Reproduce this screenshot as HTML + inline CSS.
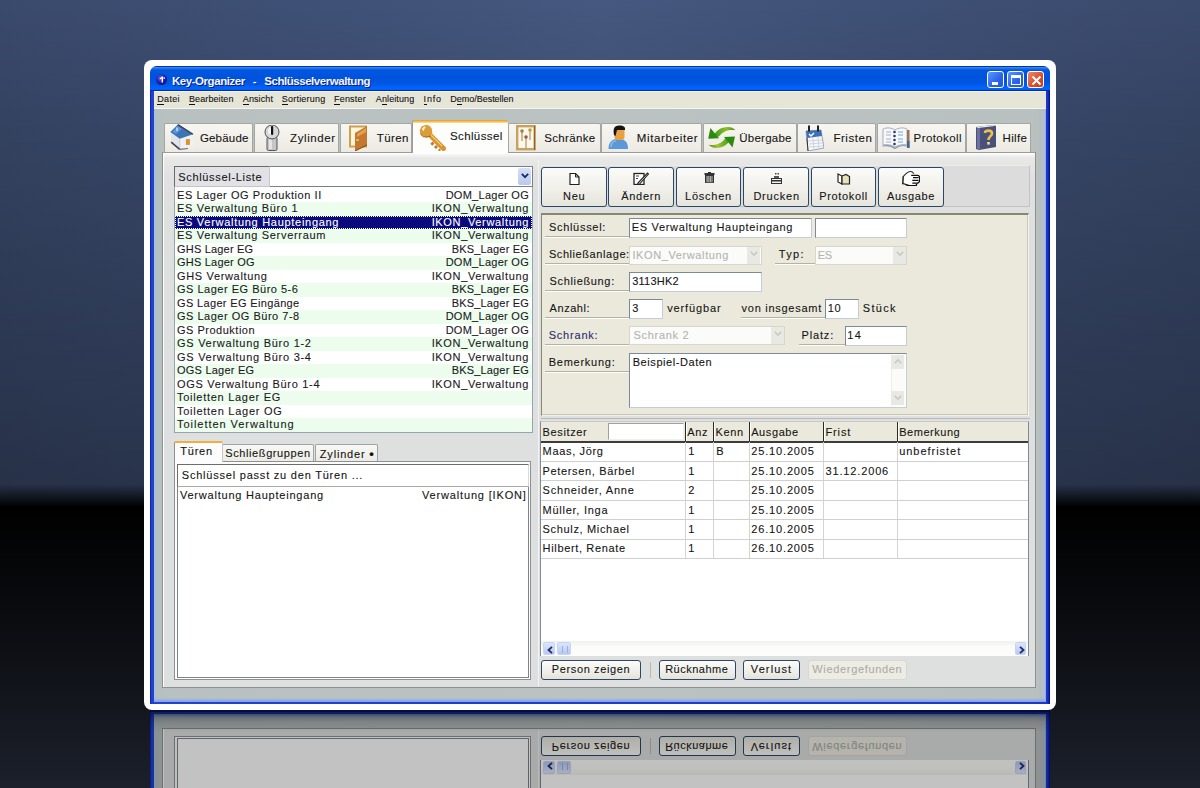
<!DOCTYPE html>
<html><head><meta charset="utf-8">
<style>
*{box-sizing:border-box;margin:0;padding:0}
html,body{width:1200px;height:788px;overflow:hidden}
body{position:relative;-webkit-text-stroke:0.1px currentColor;font-family:"Liberation Sans",sans-serif;font-size:11px;letter-spacing:0;color:#1a1a1a;line-height:13px;
background:#000}
.a{position:absolute}
#bgtop{left:0;top:0;width:1200px;height:507px;
background:linear-gradient(to bottom,rgba(0,0,0,0) 0,rgba(0,0,0,.12) 150px,rgba(0,0,0,.33) 484px,rgba(0,0,0,1) 507px),
linear-gradient(to right,#3a4a6c 0%,#3f5076 25%,#46587f 50%,#3f5076 75%,#3a4a6c 100%);}
#bgbot{left:0;top:506px;width:1200px;height:282px;background:linear-gradient(to bottom,#000 0%,#050608 20%,#0d0f14 50%,#151820 75%,#1c202b 100%)}
#frame{left:144px;top:60px;width:912px;height:650px;background:#fff;border-radius:8px}
#win{left:150px;top:66px;width:900px;height:638px;background:linear-gradient(to right,#0612a0 0,#1c3ccc 1px,#2242d0 3px,#1c38c8 897px,#0a20b0 899px,#000870 900px);border-radius:7px 7px 0 0;overflow:hidden}
#title{left:0;top:0;width:900px;height:25px;border-radius:7px 7px 0 0;
background:linear-gradient(to bottom,#003aa0 0,#003aa0 1px,#3d8eff 1px,#2a78f0 2px,#0058e0 4px,#0052dc 12px,#0058e6 18px,#0066ff 22px,#0060f8 23.5px,#0030a0 24px,#0030a0 25px)}
#ttext{left:22px;top:9.2px;color:#f2f6ff;word-spacing:1.3px;font-weight:bold;font-size:11.5px;-webkit-text-stroke:0;white-space:pre;text-shadow:1px 1px 0 #0a1e78}
#ticon{left:6px;top:8px;width:11px;height:11px;border-radius:50%;background:radial-gradient(circle at 40% 35%,#5a5af0,#1a1aa0 55%,#0c0c60)}
.tb{top:5px;width:17px;height:17px;border:1px solid #fff;border-radius:3px}
.tbb{background:linear-gradient(135deg,#5c98ff,#2a62e8 60%,#2058e0)}
.tbc{background:linear-gradient(135deg,#f08868,#d84c28 60%,#c83c1c)}
#menu{left:4px;top:25px;width:892px;height:17px;background:#e5e5d8;border-top:1px solid #f4f4fa}
.mi{font-size:9px;line-height:11px;color:#111;white-space:pre}
.mi u{text-decoration:none;border-bottom:1px solid #111;display:inline-block;line-height:9.2px}
#body{left:4px;top:42px;width:892px;height:593.5px;border-top:1px solid #f4f4f4;background:linear-gradient(to bottom,rgba(255,255,255,0) 0,rgba(255,255,255,0) 589px,rgba(150,180,235,.85) 590.5px,rgba(130,160,230,.9) 592.5px),linear-gradient(to right,#a8bce8 0,#b0c0c4 1.5px,#b4c0c0 4px,#b9c0c0 8px,#bac2c2 50%,#b9c0c0 884px,#b8bcbc 887px,#a8c0e0 891px,#7898e0 892px)}

.tab{top:123px;height:29px;border:1px solid #a4a6a4;border-bottom:none;border-radius:2px 2px 0 0;background:linear-gradient(#f7f6f1,#eceae2)}
.tab.act{top:120px;height:33px;background:linear-gradient(#e49a2a 0,#eeb040 1px,#f8d888 2.5px,#fefcf4 3.5px,#fdfdfc 6px);border:none;border-left:1px solid #9c9c9c;z-index:2}
.t{white-space:pre;color:#151515}
#panel{left:162px;top:152px;width:874px;height:536px;background:linear-gradient(#fbfbfb 0,#e8e8e6 5px,#e0e1e0 25px,#dedfdf 60px);border:1px solid #8e9090;border-top-color:#9a9a9a;box-shadow:inset 1px 1px 0 #fff}
#lh{left:174px;top:166px;width:96px;height:21px;background:#e2e2e6;border:1px solid #6a6a6a;border-right:1px solid #c8c8c8;border-bottom:1px solid #c4c4c4}
#combo{left:270px;top:166px;width:263px;height:21px;background:#fff;border:1px solid #7a8088;border-left:none}
#ddb{left:518px;top:168px;width:13px;height:17px;background:linear-gradient(#d6e0f8,#b8c8f0);border-radius:2px}
#list{left:174px;top:187px;width:359px;height:246px;background:#fff;border:1px solid #97a4b0;border-top:none;overflow:hidden}
.r{position:absolute;left:0;width:357px;height:13.5px;white-space:pre}
.r span{position:absolute;top:0px;letter-spacing:0.55px}
.r .L{left:2px}.r .R{right:3px}
.r.g{background:#ecfdee}
.r.sel{background:#0a0a7e;color:#fff;outline:1px dotted #fff;outline-offset:-1px}

.btab{top:444px;height:17px;border:1px solid #a0a4a8;border-bottom:none;border-radius:2px 2px 0 0;background:linear-gradient(#f8f8f4,#ecebe4);white-space:pre}
.btab.act{top:441px;height:21px;background:#fcfcfc;border-top:2px solid #f0b040;border-left-color:#8c9090;border-right-color:#c8c8c8;z-index:2}
#tp{left:174px;top:461px;width:357px;height:219px;background:#fcfcfc;border:1px solid #8c9090;box-shadow:inset -1px -1px 0 #fff}
#tch{left:177px;top:464px;width:352px;height:23px;background:#fff;border:1px solid;border-color:#6c6c6c #d8d8d8 #a8a8a8 #6c6c6c}
#tcl{left:177px;top:487px;width:352px;height:191px;background:#fff;border:1px solid #7c8488;border-top:none}
#tb{left:541px;top:165px;width:489px;height:42px;background:#dcdcdc;border:1px solid #c4c4c4;border-top-color:#ececec;border-left-color:#ececec}
.btn{top:167px;height:40px;border:1px solid #2c4868;border-radius:3px;background:linear-gradient(#fbfbf8,#efeee8 60%,#e6e5dc);text-align:center}
#form{left:541px;top:213px;width:488px;height:203px;background:#ebe9dc;border:1px solid #8a8770;border-top:2px solid #8a8770;border-right-color:#f6f6f0;border-bottom-color:#f0f0e8;box-shadow:inset -1px -1px 0 #c8c6b8}
.lab{white-space:pre}
.sep{height:2px;border-top:1px solid #b4b2a2;border-bottom:1px solid #fff}
.inp{background:#fff;border:1px solid #7a8a99;border-right-color:#c4ccd4;border-bottom-color:#c4ccd4;white-space:pre;padding-left:3px;line-height:17px}
.dis{background:#fbfbf9;border:1px solid #d6d6ce;color:#aaa;white-space:pre;padding-left:3px;line-height:17px}
.ddd{width:13px;height:17px;background:#e9e9e3}
#grid{left:540px;top:421px;width:489px;height:235px;background:#fff;border:1px solid #7c8c9c;border-top-color:#c8c8c8}
.gh{top:422px;height:20px;background:#ebe9dc}
.ghl{left:541px;top:441px;width:487px;height:2px;background:#3c3c3c}
.gcol{width:1px;background:#d4d4d4}
.grow{left:541px;width:487px;height:1px;background:#d0d0d0}
.gt{white-space:pre}
.bb{top:660px;height:20px;border:1px solid #2c4868;border-radius:3px;background:linear-gradient(#fbfbf8,#efeee8 60%,#e4e3da);text-align:center;white-space:pre;line-height:17px}

.gr{letter-spacing:0.5px}
.sbb{height:13px;background:linear-gradient(#dce6fc,#b8c8f2);border-radius:2px;border:1px solid #c8d4f4}

#reflov{left:150px;top:0;width:900px;height:78px;background:linear-gradient(to bottom,rgba(0,0,10,.6) 0,rgba(0,0,10,.55) 4px,rgba(0,0,0,.45) 6px,rgba(0,0,0,.32) 12px,rgba(0,0,0,.24) 22px,rgba(0,0,0,.24) 78px)}
</style></head><body>
<div class="a" id="bgtop"></div>
<div class="a" id="bgbot"></div>
<div class="a" id="frame"></div>
<div class="a" id="app" style="left:0;top:0;width:1200px;height:788px">
<div class="a" id="win">
  <div class="a" id="title">
    <div class="a" id="ticon"><svg class="a" style="left:0;top:0" width="11" height="11" viewBox="0 0 11 11"><path d="M3.5,4.5 L6,2.5 L7,2.5 L7,8.5 L5.6,8.5 L5.6,4.6 L4,5.6 Z" fill="#fff"/><circle cx="8.2" cy="4" r="0.9" fill="#c8c8ff"/></svg></div>
    <div class="a" id="ttext" style="--w:197.5;letter-spacing:-0.454px">Key-Organizer  -  Schlüsselverwaltung</div>
    <div class="a tb tbb" style="left:837px"><div class="a" style="left:4px;top:10px;width:6px;height:3px;background:#fff"></div></div>
    <div class="a tb tbb" style="left:857px"><div class="a" style="left:3px;top:3px;width:10px;height:10px;border:1px solid #fff;border-top-width:3px"></div></div>
    <div class="a tb tbc" style="left:877px"><svg class="a" style="left:2px;top:2px" width="13" height="13" viewBox="0 0 13 13"><path d="M2.5,2.5 L10.5,10.5 M10.5,2.5 L2.5,10.5" stroke="#fff" stroke-width="2"/></svg></div>
  </div>
  <div class="a" id="menu"></div>
  <div class="a" id="body"></div>
</div>
<div class="a mi" style="left:157.3px;top:93.8px;--w:21.2;letter-spacing:0.296px"><u>D</u>atei</div>
<div class="a mi" style="left:189.0px;top:93.8px;--w:43.4;letter-spacing:0.095px"><u>B</u>earbeiten</div>
<div class="a mi" style="left:242.8px;top:93.8px;--w:29.1;letter-spacing:0.095px"><u>A</u>nsicht</div>
<div class="a mi" style="left:281.8px;top:93.8px;--w:42.4;letter-spacing:0.206px"><u>S</u>ortierung</div>
<div class="a mi" style="left:334.0px;top:93.8px;--w:30.7;letter-spacing:0.197px"><u>F</u>enster</div>
<div class="a mi" style="left:375.8px;top:93.8px;--w:37.4;letter-spacing:0.105px">A<u>n</u>leitung</div>
<div class="a mi" style="left:423.6px;top:93.8px;--w:16.5;letter-spacing:0.823px"><u>I</u>nfo</div>
<div class="a mi" style="left:450.2px;top:93.8px;--w:62.4;letter-spacing:-0.011px">D<u>e</u>mo/Bestellen</div>
<div class="a" id="panel"></div>
<div class="a tab" style="left:164px;width:89px"></div>
<div class="a tab" style="left:254px;width:85px"></div>
<div class="a tab" style="left:340px;width:72px"></div>
<div class="a tab act" style="left:412px;width:96px"></div>
<div class="a tab" style="left:508px;width:93px"></div>
<div class="a tab" style="left:601px;width:101px"></div>
<div class="a tab" style="left:703px;width:94px"></div>
<div class="a tab" style="left:797px;width:79px"></div>
<div class="a tab" style="left:877px;width:89px"></div>
<div class="a tab" style="left:966px;width:65px"></div>
<div class="a t" style="left:199.9px;top:131.8px;--w:47.5;letter-spacing:0.195px;z-index:4;font-size:11.5px">Gebäude</div>
<div class="a t" style="left:290.0px;top:131.8px;--w:44.2;letter-spacing:0.613px;z-index:4;font-size:11.5px">Zylinder</div>
<div class="a t" style="left:376.7px;top:131.8px;--w:30.8;letter-spacing:0.438px;z-index:4;font-size:11.5px">Türen</div>
<div class="a t" style="left:450.0px;top:130.2px;--w:51.2;letter-spacing:0.373px;z-index:4;font-size:11.5px">Schlüssel</div>
<div class="a t" style="left:544.2px;top:131.8px;--w:50.0;letter-spacing:0.344px;z-index:4;font-size:11.5px">Schränke</div>
<div class="a t" style="left:636.7px;top:131.8px;--w:60.0;letter-spacing:0.667px;z-index:4;font-size:11.5px">Mitarbeiter</div>
<div class="a t" style="left:739.2px;top:131.8px;--w:51.3;letter-spacing:0.255px;z-index:4;font-size:11.5px">Übergabe</div>
<div class="a t" style="left:833.4px;top:131.8px;--w:37.5;letter-spacing:0.557px;z-index:4;font-size:11.5px">Fristen</div>
<div class="a t" style="left:913.6px;top:131.8px;--w:46.9;letter-spacing:0.394px;z-index:4;font-size:11.5px">Protokoll</div>
<div class="a t" style="left:1002.5px;top:131.8px;--w:23.4;letter-spacing:0.346px;z-index:4;font-size:11.5px">Hilfe</div>
<div class="a" id="lh"></div>
<div class="a t" style="left:178.2px;top:171.0px;--w:82.5;letter-spacing:0.680px;">Schlüssel-Liste</div>
<div class="a" id="combo"></div><div class="a" id="ddb"><svg class="a" style="left:3px;top:5px" width="8" height="6" viewBox="0 0 8 6"><path d="M0.8,0.8 L4,4.2 L7.2,0.8" stroke="#1c2c5c" stroke-width="1.8" fill="none"/></svg></div>
<div class="a" id="list">
<div class="r" style="top:1.5px"><span class="L" style="--w:143.2;letter-spacing:0.556px">ES Lager OG Produktion II</span><span class="R" style="--w:82.1;letter-spacing:0.273px">DOM_Lager OG</span></div>
<div class="r g" style="top:15.0px"><span class="L" style="--w:119.6;letter-spacing:0.683px">ES Verwaltung Büro 1</span><span class="R" style="--w:95.7;letter-spacing:0.662px">IKON_Verwaltung</span></div>
<div class="r sel" style="top:28.5px"><span class="L" style="--w:160.5;letter-spacing:0.711px">ES Verwaltung Haupteingang</span><span class="R" style="--w:95.7;letter-spacing:0.662px">IKON_Verwaltung</span></div>
<div class="r g" style="top:42.0px"><span class="L" style="--w:147.4;letter-spacing:0.684px">ES Verwaltung Serverraum</span><span class="R" style="--w:95.7;letter-spacing:0.662px">IKON_Verwaltung</span></div>
<div class="r" style="top:55.5px"><span class="L" style="--w:75.1;letter-spacing:0.192px">GHS Lager EG</span><span class="R" style="--w:76.2;letter-spacing:0.180px">BKS_Lager EG</span></div>
<div class="r g" style="top:69.0px"><span class="L" style="--w:76.6;letter-spacing:0.218px">GHS Lager OG</span><span class="R" style="--w:82.1;letter-spacing:0.273px">DOM_Lager OG</span></div>
<div class="r" style="top:82.5px"><span class="L" style="--w:88.9;letter-spacing:0.659px">GHS Verwaltung</span><span class="R" style="--w:95.7;letter-spacing:0.662px">IKON_Verwaltung</span></div>
<div class="r g" style="top:96.0px"><span class="L" style="--w:119.9;letter-spacing:0.506px">GS Lager EG Büro 5-6</span><span class="R" style="--w:76.2;letter-spacing:0.180px">BKS_Lager EG</span></div>
<div class="r" style="top:109.5px"><span class="L" style="--w:121.2;letter-spacing:0.349px">GS Lager EG Eingänge</span><span class="R" style="--w:76.2;letter-spacing:0.180px">BKS_Lager EG</span></div>
<div class="r g" style="top:123.0px"><span class="L" style="--w:121.2;letter-spacing:0.511px">GS Lager OG Büro 7-8</span><span class="R" style="--w:82.1;letter-spacing:0.273px">DOM_Lager OG</span></div>
<div class="r" style="top:136.5px"><span class="L" style="--w:76.6;letter-spacing:0.504px">GS Produktion</span><span class="R" style="--w:82.1;letter-spacing:0.273px">DOM_Lager OG</span></div>
<div class="r g" style="top:150.0px"><span class="L" style="--w:133.0;letter-spacing:0.732px">GS Verwaltung Büro 1-2</span><span class="R" style="--w:95.7;letter-spacing:0.662px">IKON_Verwaltung</span></div>
<div class="r" style="top:163.5px"><span class="L" style="--w:133.0;letter-spacing:0.732px">GS Verwaltung Büro 3-4</span><span class="R" style="--w:95.7;letter-spacing:0.662px">IKON_Verwaltung</span></div>
<div class="r g" style="top:177.0px"><span class="L" style="--w:76.0;letter-spacing:0.219px">OGS Lager EG</span><span class="R" style="--w:76.2;letter-spacing:0.180px">BKS_Lager EG</span></div>
<div class="r" style="top:190.5px"><span class="L" style="--w:141.6;letter-spacing:0.701px">OGS Verwaltung Büro 1-4</span><span class="R" style="--w:95.7;letter-spacing:0.662px">IKON_Verwaltung</span></div>
<div class="r g" style="top:204.0px"><span class="L" style="--w:102.3;letter-spacing:0.716px">Toiletten Lager EG</span></div>
<div class="r" style="top:217.5px"><span class="L" style="--w:103.8;letter-spacing:0.733px">Toiletten Lager OG</span></div>
<div class="r g" style="top:231.0px"><span class="L" style="--w:115.6;letter-spacing:0.955px">Toiletten Verwaltung</span></div>
</div>
<div class="a" id="tp"></div>
<div class="a btab act" style="left:174px;width:49px"></div>
<div class="a btab" style="left:222px;width:92px"></div>
<div class="a btab" style="left:315px;width:63px"></div>
<div class="a t" style="left:180.2px;top:444.7px;--w:31.0;letter-spacing:0.812px;z-index:4">Türen</div>
<div class="a t" style="left:225.3px;top:446.9px;--w:83.8;letter-spacing:0.595px;z-index:4">Schließgruppen</div>
<div class="a t" style="left:319.8px;top:446.9px;--w:53.1;letter-spacing:0.817px;z-index:4;--n:10">Zylinder <b style="font-size:13px;position:relative;top:0.5px">•</b></div>
<div class="a" id="tch"></div>
<div class="a" id="tcl"></div>
<div class="a t" style="left:181.8px;top:468.7px;--w:179.6;letter-spacing:0.783px;">Schlüssel passt zu den Türen ...</div>
<div class="a t" style="left:179.9px;top:488.7px;--w:142.3;letter-spacing:0.787px;">Verwaltung Haupteingang</div>
<div class="a t" style="left:422.0px;top:488.7px;--w:102.9;letter-spacing:0.838px;">Verwaltung [IKON]</div>
<div class="a" id="tb"></div>
<div class="a btn" style="left:541px;width:66px"></div>
<div class="a btn" style="left:608px;width:66px"></div>
<div class="a btn" style="left:676px;width:65px"></div>
<div class="a btn" style="left:743px;width:66px"></div>
<div class="a btn" style="left:811px;width:65px"></div>
<div class="a btn" style="left:878px;width:66px"></div>
<div class="a t" style="left:563.1px;top:189.6px;--w:20.5;letter-spacing:0.656px;z-index:4">Neu</div>
<div class="a t" style="left:621.2px;top:189.6px;--w:38.1;letter-spacing:0.723px;z-index:4">Ändern</div>
<div class="a t" style="left:685.1px;top:189.6px;--w:45.1;letter-spacing:0.751px;z-index:4">Löschen</div>
<div class="a t" style="left:753.4px;top:189.6px;--w:44.7;letter-spacing:0.789px;z-index:4">Drucken</div>
<div class="a t" style="left:819.2px;top:189.6px;--w:47.0;letter-spacing:0.650px;z-index:4">Protokoll</div>
<div class="a t" style="left:887.0px;top:190.1px;--w:46.5;letter-spacing:0.677px;z-index:4">Ausgabe</div>
<div class="a" id="form"></div>
<div class="a t" style="left:548.9px;top:220.6px;--w:55.5;letter-spacing:0.707px;">Schlüssel:</div>
<div class="a sep" style="left:545px;top:236px;width:84px"></div>
<div class="a inp" style="left:629px;top:218px;width:183px;height:20px"></div>
<div class="a inp" style="left:815px;top:218px;width:92px;height:20px"></div>
<div class="a t" style="left:631.7px;top:220.9px;--w:159.8;letter-spacing:0.683px;">ES Verwaltung Haupteingang</div>
<div class="a t" style="left:548.9px;top:247.9px;--w:79.3;letter-spacing:0.578px;">Schließanlage:</div>
<div class="a sep" style="left:545px;top:263px;width:84px"></div>
<div class="a dis" style="left:629px;top:246px;width:133px;height:19px"></div>
<div class="a ddd" style="left:747px;top:247px"><svg class="a" style="left:3px;top:4px" width="8" height="6" viewBox="0 0 8 6"><path d="M0.8,0.8 L4,4.2 L7.2,0.8" stroke="#c8c8c0" stroke-width="1.6" fill="none"/></svg></div>
<div class="a t" style="left:632.4px;top:249.0px;--w:95.0;letter-spacing:0.612px;color:#b4b4b0">IKON_Verwaltung</div>
<div class="a t" style="left:778.7px;top:247.9px;--w:24.0;letter-spacing:1.401px;">Typ:</div>
<div class="a sep" style="left:775px;top:263px;width:40px"></div>
<div class="a dis" style="left:815px;top:246px;width:92px;height:19px"></div>
<div class="a ddd" style="left:893px;top:247px"><svg class="a" style="left:3px;top:4px" width="8" height="6" viewBox="0 0 8 6"><path d="M0.8,0.8 L4,4.2 L7.2,0.8" stroke="#c8c8c0" stroke-width="1.6" fill="none"/></svg></div>
<div class="a t" style="left:817.7px;top:249.0px;--w:13.5;letter-spacing:-0.188px;color:#b4b4b0">ES</div>
<div class="a t" style="left:549.6px;top:274.9px;--w:63.6;letter-spacing:0.651px;">Schließung:</div>
<div class="a sep" style="left:545px;top:290px;width:84px"></div>
<div class="a inp" style="left:629px;top:272px;width:133px;height:20px"></div>
<div class="a t" style="left:632.2px;top:274.9px;--w:45.5;letter-spacing:0.240px;">3113HK2</div>
<div class="a t" style="left:549.6px;top:301.9px;--w:39.0;letter-spacing:0.549px;">Anzahl:</div>
<div class="a sep" style="left:545px;top:317px;width:84px"></div>
<div class="a inp" style="left:629px;top:299px;width:34px;height:20px"></div>
<div class="a t" style="left:632.2px;top:301.9px;--w:5.0;letter-spacing:-0.125px;">3</div>
<div class="a t" style="left:667.2px;top:301.9px;--w:52.5;letter-spacing:0.877px;">verfügbar</div>
<div class="a t" style="left:741.6px;top:301.9px;--w:78.6;letter-spacing:0.722px;">von insgesamt</div>
<div class="a sep" style="left:741px;top:317px;width:84px"></div>
<div class="a inp" style="left:825px;top:299px;width:34px;height:20px"></div>
<div class="a t" style="left:827.7px;top:301.9px;--w:12.0;letter-spacing:0.750px;">10</div>
<div class="a t" style="left:862.8px;top:301.9px;--w:31.8;letter-spacing:1.321px;">Stück</div>
<div class="a t" style="left:548.7px;top:328.9px;--w:48.0;letter-spacing:0.797px;color:#2c2c70">Schrank:</div>
<div class="a sep" style="left:545px;top:344px;width:84px"></div>
<div class="a dis" style="left:629px;top:326px;width:156px;height:19px"></div>
<div class="a ddd" style="left:771px;top:327px"><svg class="a" style="left:3px;top:4px" width="8" height="6" viewBox="0 0 8 6"><path d="M0.8,0.8 L4,4.2 L7.2,0.8" stroke="#c8c8c0" stroke-width="1.6" fill="none"/></svg></div>
<div class="a t" style="left:633.6px;top:329.4px;--w:54.0;letter-spacing:0.684px;color:#b4b4b0">Schrank 2</div>
<div class="a t" style="left:801.6px;top:328.9px;--w:30.6;letter-spacing:0.817px;">Platz:</div>
<div class="a sep" style="left:799px;top:344px;width:46px"></div>
<div class="a inp" style="left:845px;top:326px;width:62px;height:20px"></div>
<div class="a t" style="left:847.2px;top:328.9px;--w:12.6;letter-spacing:1.350px;">14</div>
<div class="a t" style="left:548.7px;top:355.9px;--w:65.1;letter-spacing:0.754px;">Bemerkung:</div>
<div class="a sep" style="left:545px;top:371px;width:84px"></div>
<div class="a inp" style="left:629px;top:353px;width:278px;height:55px"></div>
<div class="a t" style="left:632.7px;top:355.9px;--w:78.0;letter-spacing:0.573px;">Beispiel-Daten</div>
<div class="a" style="left:891px;top:355px;width:14px;height:51px;background:#fbfbf9;border-left:1px solid #eeeeea"></div>
<div class="a ddd" style="left:891px;top:355px;height:14px"><svg class="a" style="left:3px;top:3px" width="8" height="6" viewBox="0 0 8 6"><path d="M0.8,5.2 L4,1.8 L7.2,5.2" stroke="#c8c8c0" stroke-width="1.6" fill="none"/></svg></div>
<div class="a ddd" style="left:891px;top:391px;height:14px"><svg class="a" style="left:3px;top:4px" width="8" height="6" viewBox="0 0 8 6"><path d="M0.8,0.8 L4,4.2 L7.2,0.8" stroke="#c8c8c0" stroke-width="1.6" fill="none"/></svg></div>
<div class="a" style="left:538px;top:160px;width:1px;height:526px;background:#f2f2f2"></div>
<div class="a" style="left:541px;top:418px;width:489px;height:1px;background:#b8b8b8;border-bottom:0"></div>
<div class="a" id="grid"></div>
<div class="a gh" style="left:541px;width:487px"></div>
<div class="a" style="left:608px;top:423px;width:76px;height:17px;background:#fff;border:1px solid;border-color:#a0a0a0 #f0f0f0 #f0f0f0 #a0a0a0"></div>
<div class="a ghl"></div>
<div class="a t" style="left:542.6px;top:425.6px;--w:43.2;letter-spacing:0.636px;">Besitzer</div>
<div class="a t" style="left:687.2px;top:425.6px;--w:19.4;letter-spacing:0.716px;">Anz</div>
<div class="a t" style="left:715.6px;top:425.6px;--w:26.6;letter-spacing:0.632px;">Kenn</div>
<div class="a t" style="left:751.2px;top:425.6px;--w:46.0;letter-spacing:0.594px;">Ausgabe</div>
<div class="a t" style="left:825.5px;top:425.6px;--w:23.8;letter-spacing:0.852px;">Frist</div>
<div class="a t" style="left:899.2px;top:425.6px;--w:59.5;letter-spacing:0.529px;">Bemerkung</div>
<div class="a" style="left:685px;top:422px;width:2px;height:19px;background:#2a2a2a;border-right:1px solid #fff"></div>
<div class="a gcol" style="left:685px;top:442px;height:117px"></div>
<div class="a" style="left:713px;top:422px;width:2px;height:19px;background:#2a2a2a;border-right:1px solid #fff"></div>
<div class="a gcol" style="left:713px;top:442px;height:117px"></div>
<div class="a" style="left:749px;top:422px;width:2px;height:19px;background:#2a2a2a;border-right:1px solid #fff"></div>
<div class="a gcol" style="left:749px;top:442px;height:117px"></div>
<div class="a" style="left:823px;top:422px;width:2px;height:19px;background:#2a2a2a;border-right:1px solid #fff"></div>
<div class="a gcol" style="left:823px;top:442px;height:117px"></div>
<div class="a" style="left:897px;top:422px;width:2px;height:19px;background:#2a2a2a;border-right:1px solid #fff"></div>
<div class="a gcol" style="left:897px;top:442px;height:117px"></div>
<div class="a grow" style="top:461.0px"></div>
<div class="a t" style="left:542.6px;top:445.4px;--w:59.4;letter-spacing:0.664px">Maas, Jörg</div>
<div class="a t" style="left:688.2px;top:445.4px">1</div>
<div class="a t" style="left:716.2px;top:445.4px">B</div>
<div class="a t" style="left:751.2px;top:445.4px;--w:61.75;letter-spacing:0.854px">25.10.2005</div>
<div class="a t" style="left:899.2px;top:445.4px;--w:60;letter-spacing:0.963px">unbefristet</div>
<div class="a grow" style="top:480.4px"></div>
<div class="a t" style="left:542.6px;top:464.8px;--w:90.6;letter-spacing:0.644px">Petersen, Bärbel</div>
<div class="a t" style="left:688.2px;top:464.8px">1</div>
<div class="a t" style="left:751.2px;top:464.8px;--w:61.75;letter-spacing:0.854px">25.10.2005</div>
<div class="a t" style="left:825.5px;top:464.8px;--w:61.75;letter-spacing:0.854px">31.12.2006</div>
<div class="a grow" style="top:499.8px"></div>
<div class="a t" style="left:542.6px;top:484.2px;--w:90.3;letter-spacing:0.798px">Schneider, Anne</div>
<div class="a t" style="left:688.2px;top:484.2px">2</div>
<div class="a t" style="left:751.2px;top:484.2px;--w:61.75;letter-spacing:0.854px">25.10.2005</div>
<div class="a grow" style="top:519.2px"></div>
<div class="a t" style="left:542.6px;top:503.6px;--w:64;letter-spacing:0.739px">Müller, Inga</div>
<div class="a t" style="left:688.2px;top:503.6px">1</div>
<div class="a t" style="left:751.2px;top:503.6px;--w:61.75;letter-spacing:0.854px">25.10.2005</div>
<div class="a grow" style="top:538.6px"></div>
<div class="a t" style="left:542.6px;top:523.0px;--w:85.3;letter-spacing:0.661px">Schulz, Michael</div>
<div class="a t" style="left:688.2px;top:523.0px">1</div>
<div class="a t" style="left:751.2px;top:523.0px;--w:61.75;letter-spacing:0.854px">26.10.2005</div>
<div class="a grow" style="top:558.0px"></div>
<div class="a t" style="left:542.6px;top:542.4px;--w:81.5;letter-spacing:0.652px">Hilbert, Renate</div>
<div class="a t" style="left:688.2px;top:542.4px">1</div>
<div class="a t" style="left:751.2px;top:542.4px;--w:61.75;letter-spacing:0.854px">26.10.2005</div>
<div class="a" style="left:541px;top:641px;width:487px;height:15px;background:linear-gradient(#f2f2ec,#fbfbf8 40%,#fdfdfb)"></div>
<div class="a sbb" style="left:543px;top:642px;width:12px"><svg class="a" style="left:3px;top:3px" width="6" height="8" viewBox="0 0 6 8"><path d="M5,0.8 L1.5,4 L5,7.2" stroke="#1c2c6c" stroke-width="1.8" fill="none"/></svg></div>
<div class="a sbb" style="left:557px;top:642px;width:14px"><div class="a" style="left:4px;top:3px;width:6px;height:7px;border-left:1px solid #9cb0e0;border-right:1px solid #9cb0e0"></div></div>
<div class="a sbb" style="left:1015px;top:642px;width:11px"><svg class="a" style="left:3px;top:3px" width="6" height="8" viewBox="0 0 6 8"><path d="M1,0.8 L4.5,4 L1,7.2" stroke="#1c2c6c" stroke-width="1.8" fill="none"/></svg></div>
<div class="a bb" style="left:541px;width:100px"></div>
<div class="a" style="left:650px;top:662px;width:1px;height:16px;background:#b8b8b8"></div>
<div class="a bb" style="left:659px;width:77px"></div>
<div class="a bb" style="left:743px;width:57px"></div>
<div class="a bb" style="left:808px;width:99px;border-color:#d8d8cc;background:#ecebe4"></div>
<div class="a t" style="left:551.8px;top:662.9px;--w:76.8;letter-spacing:0.623px;z-index:4">Person zeigen</div>
<div class="a t" style="left:665.2px;top:662.9px;--w:61.6;letter-spacing:0.487px;z-index:4">Rücknahme</div>
<div class="a t" style="left:750.8px;top:662.9px;--w:39.3;letter-spacing:1.110px;z-index:4">Verlust</div>
<div class="a t" style="left:812.3px;top:662.9px;--w:88.4;letter-spacing:0.667px;z-index:4;color:#acaca4">Wiedergefunden</div>
<svg class="a" style="left:170px;top:124px;z-index:3" width="25" height="27" viewBox="0 0 25 27"><polygon points="0.8,9 9.7,14.7 9.7,25.3 1.2,18.2" fill="#e2e4ea"/>
<polygon points="9.7,14.7 23,10.2 23.9,22.2 16.3,25.3 9.7,25.3" fill="#eef0f4"/>
<line x1="9.7" y1="14.7" x2="9.7" y2="25.3" stroke="#c0c4cc" stroke-width="0.8"/>
<polygon points="0.3,8 7.9,0.4 23,10.2 9.7,14.7" fill="#3c74b8"/>
<polygon points="2.5,7.8 7.9,2.2 12,5 6,10" fill="#5a96d8"/>
<line x1="7.9" y1="0.6" x2="23" y2="10.2" stroke="#3a4048" stroke-width="1.3"/>
<line x1="1.2" y1="18.2" x2="9.7" y2="25.3" stroke="#3c4048" stroke-width="1.6"/>
<line x1="9.7" y1="25.3" x2="18" y2="24.5" stroke="#6a6e78" stroke-width="1.2"/>
<rect x="15.9" y="15.1" width="4" height="5.8" fill="#d4962c"/>
<path d="M7,3.5 v3.5" stroke="#e8f0ff" stroke-width="1.2"/></svg>
<svg class="a" style="left:264px;top:125px;z-index:3" width="17" height="26" viewBox="0 0 17 26"><rect x="3" y="12" width="10" height="13.5" rx="1.5" fill="#c6c6c6" stroke="#545454" stroke-width="1"/>
<rect x="5" y="14" width="3" height="10" fill="#e4e4e4"/>
<circle cx="8" cy="7" r="7" fill="#d6d6d6" stroke="#505050" stroke-width="1"/>
<ellipse cx="6" cy="6" rx="2" ry="3.5" fill="#f4f4f4"/>
<rect x="7" y="1" width="2.2" height="9" rx="1" fill="#101010"/></svg>
<svg class="a" style="left:349px;top:124px;z-index:3" width="19" height="27" viewBox="0 0 19 27"><rect x="1" y="2.5" width="16" height="20" fill="#fff6dc" stroke="#d0a050" stroke-width="2"/>
<polygon points="6,9 18,2 18,21 6,27" fill="#c47a2e"/>
<polygon points="8,10 17,4 17,8 8,13" fill="#e8a050"/>
<line x1="7" y1="16" x2="10" y2="16" stroke="#f8d090" stroke-width="1.2"/>
<line x1="6" y1="27" x2="18" y2="21" stroke="#7a4010" stroke-width="1"/></svg>
<svg class="a" style="left:419px;top:124px;z-index:3" width="27" height="27" viewBox="0 0 27 27"><line x1="9" y1="9" x2="24.5" y2="24.5" stroke="#d89434" stroke-width="5" stroke-linecap="round"/>
<path d="M13.5,17.5 l-2.2,2.2 l2,2 l2.2,-2.2 Z M17,21 l-2,2 l2,2 l2,-2 Z M20.5,24.5 l-1.5,1.5 l1.5,1.5 l1.5,-1.5 Z" fill="#c07a20"/>
<line x1="10.5" y1="9.5" x2="23" y2="22" stroke="#f4c870" stroke-width="1.3"/>
<path d="M7,0.8 L10.5,1.8 L12.8,4.8 L13.3,8.5 L11.5,11.8 L8,13.2 L4.2,12.6 L1.4,10 L0.8,6.2 L2.5,2.6 Z" fill="#dc9c38"/>
<path d="M3,5 C3.5,3 5.5,2.2 7,2.5 C6,4 5,5.5 4.5,7.5 Z" fill="#fff6dc"/>
<path d="M1.4,10 L4.2,12.6 L8,13.2 L11.5,11.8" stroke="#9c6418" stroke-width="1" fill="none"/></svg>
<svg class="a" style="left:516px;top:125px;z-index:3" width="20" height="26" viewBox="0 0 20 26"><rect x="1.2" y="1.2" width="17.5" height="23" fill="#fdf8ea" stroke="#c8a060" stroke-width="2.4"/>
<line x1="18.5" y1="1" x2="18.5" y2="25" stroke="#8a6030" stroke-width="1"/>
<path d="M6,6 v10 M10,11 v12 M14,5 v10" stroke="#b89870" stroke-width="1.3"/>
<circle cx="6" cy="6" r="1.8" fill="#a08050"/>
<circle cx="10" cy="12" r="1.8" fill="#906040"/>
<circle cx="14" cy="5" r="1.8" fill="#b8a040"/></svg>
<svg class="a" style="left:608px;top:125px;z-index:3" width="21" height="25" viewBox="0 0 21 25"><path d="M0.5,24 C0.5,17 4,14 10,14 C16,14 20,16 20,24 Z" fill="#5a98d8"/>
<path d="M3,22 C3,18 5,16 8,16" stroke="#9ccaf0" stroke-width="1.2" fill="none"/>
<rect x="6.5" y="3" width="10" height="12" rx="3" fill="#e8a040"/>
<path d="M6,10 C5,4 6,0.5 11,0.5 C16,0.5 17.5,2 17,5 L9,5 C8.5,7 8,9 7.5,11 Z" fill="#141414"/></svg>
<svg class="a" style="left:708px;top:126px;z-index:3" width="28" height="23" viewBox="0 0 28 23"><defs><linearGradient id="ga" x1="0" y1="0" x2="1" y2="0"><stop offset="0" stop-color="#3a9a14"/><stop offset=".6" stop-color="#8cbc28"/><stop offset="1" stop-color="#5a8a20"/></linearGradient><linearGradient id="gb" x1="0" y1="0" x2="1" y2="0"><stop offset="0" stop-color="#5a8a20"/><stop offset=".4" stop-color="#9cc430"/><stop offset="1" stop-color="#3a9a14"/></linearGradient></defs>
<path d="M5,11.5 C7,5 13,1 20,1 C23,1 25.5,2.2 27.5,4.2 C22,3.2 15,4.5 11,10.5 Z" fill="url(#ga)"/>
<polygon points="2.4,2 0.2,12.7 11,12.2" fill="#2c8a10"/>
<path d="M23,11.5 C21,18 15,22 8,22 C5,22 2.5,20.8 0.5,18.8 C6,19.8 13,18.5 17,12.5 Z" fill="url(#gb)"/>
<polygon points="16,11 27,10.5 24.5,21.5" fill="#2c8a10"/></svg>
<svg class="a" style="left:805px;top:125px;z-index:3" width="19" height="26" viewBox="0 0 19 26"><polygon points="1,6 16,5 19,23 3,26" fill="#f4f6fa" stroke="#8890a0" stroke-width="0.8"/>
<polygon points="1,6 16,5 17,11 2,13" fill="#3a70b8"/>
<path d="M4,9 l2,2 l3,-3" stroke="#fff" stroke-width="1.5" fill="none"/>
<path d="M3,16 L17,15 M4,19 L17,18 M4,22 L18,21 M8,13 L9,25 M13,12 L14,24" stroke="#c8ccd8" stroke-width="0.8"/>
<line x1="2" y1="13" x2="3" y2="26" stroke="#303030" stroke-width="1"/>
<rect x="3" y="0.5" width="2" height="6" fill="#202020"/>
<rect x="12" y="0.5" width="2" height="6" fill="#202020"/></svg>
<svg class="a" style="left:882px;top:126px;z-index:3" width="28" height="23" viewBox="0 0 28 23"><path d="M1,3 C5,1 10,2 13,4 C16,2 21,1 25,3 L25,19 C21,18 16,19 13,21 C10,19 5,18 1,19 Z" fill="#f6f8fc" stroke="#a8acb8" stroke-width="1"/>
<path d="M0.5,20 C5,19 10,20 13,22.5 C16,20 21,19 25,20" stroke="#8a98b0" stroke-width="1.2" fill="none"/>
<path d="M4,6 h5 M4,9 h5 M4,13 h5 M4,16 h5" stroke="#a8b0c8" stroke-width="1"/>
<path d="M16,6 h5 M16,9 h5 M16,13 h5 M16,16 h5" stroke="#70a8d8" stroke-width="1.2"/>
<circle cx="12.5" cy="6" r="1.3" fill="#303a58"/><circle cx="12.5" cy="10" r="1.3" fill="#303a58"/><circle cx="12.5" cy="14" r="1.3" fill="#303a58"/><circle cx="12.5" cy="18" r="1.3" fill="#303a58"/>
<rect x="25" y="4" width="2.5" height="18" fill="#a07050"/>
<rect x="25" y="15" width="2.5" height="7" fill="#3a6898"/></svg>
<svg class="a" style="left:975px;top:124px;z-index:3" width="22" height="27" viewBox="0 0 22 27"><polygon points="1,3 18,1 21,2 21,23 4,26 1,25" fill="#4a5078"/>
<polygon points="1,3 18,1 20,2 3,4" fill="#e8e8f0"/>
<rect x="2" y="4" width="3" height="21" fill="#6a70a0"/>
<path d="M10,9 C10,6 17,5.5 17,9.5 C17,12 13.5,12.5 13.5,16" stroke="#e8c050" stroke-width="2.6" fill="none"/>
<rect x="12.2" y="18" width="2.6" height="2.6" fill="#f0e0a0"/></svg>
<svg class="a" style="left:569px;top:173px;z-index:3" width="11" height="12" viewBox="0 0 11 12"><path d="M1,0.5 H6.5 L10,4 V11.5 H1 Z" fill="#fff" stroke="#222" stroke-width="1.2"/>
<path d="M6.5,0.5 V4 H10" stroke="#222" stroke-width="1" fill="none"/></svg>
<svg class="a" style="left:633px;top:171px;z-index:3" width="16" height="14" viewBox="0 0 16 14"><rect x="1" y="2.5" width="10" height="11" fill="#fff" stroke="#222" stroke-width="1.3"/>
<path d="M3,5 h3 M3,7.5 h2" stroke="#444" stroke-width="1"/>
<path d="M5,12 L14.5,2 L15.5,3 L6.5,13 L4.5,13.5 Z" fill="#fff" stroke="#222" stroke-width="1.1"/></svg>
<svg class="a" style="left:704px;top:172px;z-index:3" width="11" height="11" viewBox="0 0 11 11"><rect x="0.5" y="1" width="10" height="2" fill="#333"/>
<rect x="4" y="0" width="3" height="1.5" fill="#333"/>
<rect x="1.5" y="3.5" width="8" height="7.5" fill="#777" stroke="#333" stroke-width="1"/>
<path d="M4,4 v6 M6.5,4 v6" stroke="#bbb" stroke-width="0.8"/></svg>
<svg class="a" style="left:771px;top:173px;z-index:3" width="11" height="11" viewBox="0 0 11 11"><rect x="4" y="0" width="1.5" height="1.5" fill="#444"/><rect x="6.5" y="0" width="1.5" height="1.5" fill="#444"/>
<rect x="3" y="3" width="5" height="2.5" fill="#555"/>
<rect x="0.5" y="5.5" width="10" height="5" fill="#f0f0f0" stroke="#333" stroke-width="1"/>
<rect x="1" y="7" width="9" height="1.5" fill="#333"/></svg>
<svg class="a" style="left:837px;top:173px;z-index:3" width="14" height="12" viewBox="0 0 14 12"><path d="M1,1 L5,3 V11 L1,9 Z" fill="#fff" stroke="#222" stroke-width="1.2"/>
<path d="M5,3 L9,1.5 L12.5,3.5 V11 L5,11 Z" fill="#e8e0b8" stroke="#222" stroke-width="1.2"/></svg>
<svg class="a" style="left:902px;top:171px;z-index:3" width="18" height="15" viewBox="0 0 18 15"><path d="M1.2,5.4 C3.5,3 6,0.5 8.5,0.5 C10,0.5 11,1.2 11.8,3 L15.8,4.4 C17,4.4 17.6,6.5 17.6,8.5 C17.6,10.5 16.5,12.2 14.6,12.6 L13.5,14.8 L8,14.8 C6,14.6 4,13 0.8,12.6 Z" fill="#fff"/>
<path d="M1.2,5.6 C3.5,3 6,0.5 8.5,0.5 C10,0.5 11,1.2 11.8,2.8" stroke="#333" stroke-width="1.1" fill="none"/>
<path d="M1.2,5.2 L0.8,12.6 C3,12.8 4,13.5 5,14 C6,14.5 7,14.8 8,14.8 L13.5,14.8 C14.5,14.8 14.6,13.5 14.5,12.4" stroke="#111" stroke-width="1.4" fill="none"/>
<path d="M9.2,4.4 H15.8 C17,4.4 17.8,6.5 17.8,8.5 C17.8,10.5 16.5,12.2 15,12.2" stroke="#111" stroke-width="1.4" fill="none"/>
<path d="M11,6.6 H16.6 M10.3,9.4 H16.6 M10.3,12.2 H14.8" stroke="#111" stroke-width="1.3"/></svg>

</div>
<div class="a" id="refl" style="left:0;top:710px;width:1200px;height:78px;overflow:hidden">
<div class="a" style="left:150px;top:0;width:900px;height:3px;background:#0a1c8a"></div>
<div class="a" style="left:0;top:0;width:1200px;height:78px;transform:scaleY(-1)">
<div class="a" style="left:0;top:-628px;width:1200px;height:788px">
<div class="a" id="win">
  <div class="a" id="title">
    <div class="a" id="ticon"><svg class="a" style="left:0;top:0" width="11" height="11" viewBox="0 0 11 11"><path d="M3.5,4.5 L6,2.5 L7,2.5 L7,8.5 L5.6,8.5 L5.6,4.6 L4,5.6 Z" fill="#fff"/><circle cx="8.2" cy="4" r="0.9" fill="#c8c8ff"/></svg></div>
    <div class="a" id="ttext" style="--w:197.5;letter-spacing:-0.454px">Key-Organizer  -  Schlüsselverwaltung</div>
    <div class="a tb tbb" style="left:837px"><div class="a" style="left:4px;top:10px;width:6px;height:3px;background:#fff"></div></div>
    <div class="a tb tbb" style="left:857px"><div class="a" style="left:3px;top:3px;width:10px;height:10px;border:1px solid #fff;border-top-width:3px"></div></div>
    <div class="a tb tbc" style="left:877px"><svg class="a" style="left:2px;top:2px" width="13" height="13" viewBox="0 0 13 13"><path d="M2.5,2.5 L10.5,10.5 M10.5,2.5 L2.5,10.5" stroke="#fff" stroke-width="2"/></svg></div>
  </div>
  <div class="a" id="menu"></div>
  <div class="a" id="body"></div>
</div>
<div class="a mi" style="left:157.3px;top:93.8px;--w:21.2;letter-spacing:0.296px"><u>D</u>atei</div>
<div class="a mi" style="left:189.0px;top:93.8px;--w:43.4;letter-spacing:0.095px"><u>B</u>earbeiten</div>
<div class="a mi" style="left:242.8px;top:93.8px;--w:29.1;letter-spacing:0.095px"><u>A</u>nsicht</div>
<div class="a mi" style="left:281.8px;top:93.8px;--w:42.4;letter-spacing:0.206px"><u>S</u>ortierung</div>
<div class="a mi" style="left:334.0px;top:93.8px;--w:30.7;letter-spacing:0.197px"><u>F</u>enster</div>
<div class="a mi" style="left:375.8px;top:93.8px;--w:37.4;letter-spacing:0.105px">A<u>n</u>leitung</div>
<div class="a mi" style="left:423.6px;top:93.8px;--w:16.5;letter-spacing:0.823px"><u>I</u>nfo</div>
<div class="a mi" style="left:450.2px;top:93.8px;--w:62.4;letter-spacing:-0.011px">D<u>e</u>mo/Bestellen</div>
<div class="a" id="panel"></div>
<div class="a tab" style="left:164px;width:89px"></div>
<div class="a tab" style="left:254px;width:85px"></div>
<div class="a tab" style="left:340px;width:72px"></div>
<div class="a tab act" style="left:412px;width:96px"></div>
<div class="a tab" style="left:508px;width:93px"></div>
<div class="a tab" style="left:601px;width:101px"></div>
<div class="a tab" style="left:703px;width:94px"></div>
<div class="a tab" style="left:797px;width:79px"></div>
<div class="a tab" style="left:877px;width:89px"></div>
<div class="a tab" style="left:966px;width:65px"></div>
<div class="a t" style="left:199.9px;top:131.8px;--w:47.5;letter-spacing:0.195px;z-index:4;font-size:11.5px">Gebäude</div>
<div class="a t" style="left:290.0px;top:131.8px;--w:44.2;letter-spacing:0.613px;z-index:4;font-size:11.5px">Zylinder</div>
<div class="a t" style="left:376.7px;top:131.8px;--w:30.8;letter-spacing:0.438px;z-index:4;font-size:11.5px">Türen</div>
<div class="a t" style="left:450.0px;top:130.2px;--w:51.2;letter-spacing:0.373px;z-index:4;font-size:11.5px">Schlüssel</div>
<div class="a t" style="left:544.2px;top:131.8px;--w:50.0;letter-spacing:0.344px;z-index:4;font-size:11.5px">Schränke</div>
<div class="a t" style="left:636.7px;top:131.8px;--w:60.0;letter-spacing:0.667px;z-index:4;font-size:11.5px">Mitarbeiter</div>
<div class="a t" style="left:739.2px;top:131.8px;--w:51.3;letter-spacing:0.255px;z-index:4;font-size:11.5px">Übergabe</div>
<div class="a t" style="left:833.4px;top:131.8px;--w:37.5;letter-spacing:0.557px;z-index:4;font-size:11.5px">Fristen</div>
<div class="a t" style="left:913.6px;top:131.8px;--w:46.9;letter-spacing:0.394px;z-index:4;font-size:11.5px">Protokoll</div>
<div class="a t" style="left:1002.5px;top:131.8px;--w:23.4;letter-spacing:0.346px;z-index:4;font-size:11.5px">Hilfe</div>
<div class="a" id="lh"></div>
<div class="a t" style="left:178.2px;top:171.0px;--w:82.5;letter-spacing:0.680px;">Schlüssel-Liste</div>
<div class="a" id="combo"></div><div class="a" id="ddb"><svg class="a" style="left:3px;top:5px" width="8" height="6" viewBox="0 0 8 6"><path d="M0.8,0.8 L4,4.2 L7.2,0.8" stroke="#1c2c5c" stroke-width="1.8" fill="none"/></svg></div>
<div class="a" id="list">
<div class="r" style="top:1.5px"><span class="L" style="--w:143.2;letter-spacing:0.556px">ES Lager OG Produktion II</span><span class="R" style="--w:82.1;letter-spacing:0.273px">DOM_Lager OG</span></div>
<div class="r g" style="top:15.0px"><span class="L" style="--w:119.6;letter-spacing:0.683px">ES Verwaltung Büro 1</span><span class="R" style="--w:95.7;letter-spacing:0.662px">IKON_Verwaltung</span></div>
<div class="r sel" style="top:28.5px"><span class="L" style="--w:160.5;letter-spacing:0.711px">ES Verwaltung Haupteingang</span><span class="R" style="--w:95.7;letter-spacing:0.662px">IKON_Verwaltung</span></div>
<div class="r g" style="top:42.0px"><span class="L" style="--w:147.4;letter-spacing:0.684px">ES Verwaltung Serverraum</span><span class="R" style="--w:95.7;letter-spacing:0.662px">IKON_Verwaltung</span></div>
<div class="r" style="top:55.5px"><span class="L" style="--w:75.1;letter-spacing:0.192px">GHS Lager EG</span><span class="R" style="--w:76.2;letter-spacing:0.180px">BKS_Lager EG</span></div>
<div class="r g" style="top:69.0px"><span class="L" style="--w:76.6;letter-spacing:0.218px">GHS Lager OG</span><span class="R" style="--w:82.1;letter-spacing:0.273px">DOM_Lager OG</span></div>
<div class="r" style="top:82.5px"><span class="L" style="--w:88.9;letter-spacing:0.659px">GHS Verwaltung</span><span class="R" style="--w:95.7;letter-spacing:0.662px">IKON_Verwaltung</span></div>
<div class="r g" style="top:96.0px"><span class="L" style="--w:119.9;letter-spacing:0.506px">GS Lager EG Büro 5-6</span><span class="R" style="--w:76.2;letter-spacing:0.180px">BKS_Lager EG</span></div>
<div class="r" style="top:109.5px"><span class="L" style="--w:121.2;letter-spacing:0.349px">GS Lager EG Eingänge</span><span class="R" style="--w:76.2;letter-spacing:0.180px">BKS_Lager EG</span></div>
<div class="r g" style="top:123.0px"><span class="L" style="--w:121.2;letter-spacing:0.511px">GS Lager OG Büro 7-8</span><span class="R" style="--w:82.1;letter-spacing:0.273px">DOM_Lager OG</span></div>
<div class="r" style="top:136.5px"><span class="L" style="--w:76.6;letter-spacing:0.504px">GS Produktion</span><span class="R" style="--w:82.1;letter-spacing:0.273px">DOM_Lager OG</span></div>
<div class="r g" style="top:150.0px"><span class="L" style="--w:133.0;letter-spacing:0.732px">GS Verwaltung Büro 1-2</span><span class="R" style="--w:95.7;letter-spacing:0.662px">IKON_Verwaltung</span></div>
<div class="r" style="top:163.5px"><span class="L" style="--w:133.0;letter-spacing:0.732px">GS Verwaltung Büro 3-4</span><span class="R" style="--w:95.7;letter-spacing:0.662px">IKON_Verwaltung</span></div>
<div class="r g" style="top:177.0px"><span class="L" style="--w:76.0;letter-spacing:0.219px">OGS Lager EG</span><span class="R" style="--w:76.2;letter-spacing:0.180px">BKS_Lager EG</span></div>
<div class="r" style="top:190.5px"><span class="L" style="--w:141.6;letter-spacing:0.701px">OGS Verwaltung Büro 1-4</span><span class="R" style="--w:95.7;letter-spacing:0.662px">IKON_Verwaltung</span></div>
<div class="r g" style="top:204.0px"><span class="L" style="--w:102.3;letter-spacing:0.716px">Toiletten Lager EG</span></div>
<div class="r" style="top:217.5px"><span class="L" style="--w:103.8;letter-spacing:0.733px">Toiletten Lager OG</span></div>
<div class="r g" style="top:231.0px"><span class="L" style="--w:115.6;letter-spacing:0.955px">Toiletten Verwaltung</span></div>
</div>
<div class="a" id="tp"></div>
<div class="a btab act" style="left:174px;width:49px"></div>
<div class="a btab" style="left:222px;width:92px"></div>
<div class="a btab" style="left:315px;width:63px"></div>
<div class="a t" style="left:180.2px;top:444.7px;--w:31.0;letter-spacing:0.812px;z-index:4">Türen</div>
<div class="a t" style="left:225.3px;top:446.9px;--w:83.8;letter-spacing:0.595px;z-index:4">Schließgruppen</div>
<div class="a t" style="left:319.8px;top:446.9px;--w:53.1;letter-spacing:0.817px;z-index:4;--n:10">Zylinder <b style="font-size:13px;position:relative;top:0.5px">•</b></div>
<div class="a" id="tch"></div>
<div class="a" id="tcl"></div>
<div class="a t" style="left:181.8px;top:468.7px;--w:179.6;letter-spacing:0.783px;">Schlüssel passt zu den Türen ...</div>
<div class="a t" style="left:179.9px;top:488.7px;--w:142.3;letter-spacing:0.787px;">Verwaltung Haupteingang</div>
<div class="a t" style="left:422.0px;top:488.7px;--w:102.9;letter-spacing:0.838px;">Verwaltung [IKON]</div>
<div class="a" id="tb"></div>
<div class="a btn" style="left:541px;width:66px"></div>
<div class="a btn" style="left:608px;width:66px"></div>
<div class="a btn" style="left:676px;width:65px"></div>
<div class="a btn" style="left:743px;width:66px"></div>
<div class="a btn" style="left:811px;width:65px"></div>
<div class="a btn" style="left:878px;width:66px"></div>
<div class="a t" style="left:563.1px;top:189.6px;--w:20.5;letter-spacing:0.656px;z-index:4">Neu</div>
<div class="a t" style="left:621.2px;top:189.6px;--w:38.1;letter-spacing:0.723px;z-index:4">Ändern</div>
<div class="a t" style="left:685.1px;top:189.6px;--w:45.1;letter-spacing:0.751px;z-index:4">Löschen</div>
<div class="a t" style="left:753.4px;top:189.6px;--w:44.7;letter-spacing:0.789px;z-index:4">Drucken</div>
<div class="a t" style="left:819.2px;top:189.6px;--w:47.0;letter-spacing:0.650px;z-index:4">Protokoll</div>
<div class="a t" style="left:887.0px;top:190.1px;--w:46.5;letter-spacing:0.677px;z-index:4">Ausgabe</div>
<div class="a" id="form"></div>
<div class="a t" style="left:548.9px;top:220.6px;--w:55.5;letter-spacing:0.707px;">Schlüssel:</div>
<div class="a sep" style="left:545px;top:236px;width:84px"></div>
<div class="a inp" style="left:629px;top:218px;width:183px;height:20px"></div>
<div class="a inp" style="left:815px;top:218px;width:92px;height:20px"></div>
<div class="a t" style="left:631.7px;top:220.9px;--w:159.8;letter-spacing:0.683px;">ES Verwaltung Haupteingang</div>
<div class="a t" style="left:548.9px;top:247.9px;--w:79.3;letter-spacing:0.578px;">Schließanlage:</div>
<div class="a sep" style="left:545px;top:263px;width:84px"></div>
<div class="a dis" style="left:629px;top:246px;width:133px;height:19px"></div>
<div class="a ddd" style="left:747px;top:247px"><svg class="a" style="left:3px;top:4px" width="8" height="6" viewBox="0 0 8 6"><path d="M0.8,0.8 L4,4.2 L7.2,0.8" stroke="#c8c8c0" stroke-width="1.6" fill="none"/></svg></div>
<div class="a t" style="left:632.4px;top:249.0px;--w:95.0;letter-spacing:0.612px;color:#b4b4b0">IKON_Verwaltung</div>
<div class="a t" style="left:778.7px;top:247.9px;--w:24.0;letter-spacing:1.401px;">Typ:</div>
<div class="a sep" style="left:775px;top:263px;width:40px"></div>
<div class="a dis" style="left:815px;top:246px;width:92px;height:19px"></div>
<div class="a ddd" style="left:893px;top:247px"><svg class="a" style="left:3px;top:4px" width="8" height="6" viewBox="0 0 8 6"><path d="M0.8,0.8 L4,4.2 L7.2,0.8" stroke="#c8c8c0" stroke-width="1.6" fill="none"/></svg></div>
<div class="a t" style="left:817.7px;top:249.0px;--w:13.5;letter-spacing:-0.188px;color:#b4b4b0">ES</div>
<div class="a t" style="left:549.6px;top:274.9px;--w:63.6;letter-spacing:0.651px;">Schließung:</div>
<div class="a sep" style="left:545px;top:290px;width:84px"></div>
<div class="a inp" style="left:629px;top:272px;width:133px;height:20px"></div>
<div class="a t" style="left:632.2px;top:274.9px;--w:45.5;letter-spacing:0.240px;">3113HK2</div>
<div class="a t" style="left:549.6px;top:301.9px;--w:39.0;letter-spacing:0.549px;">Anzahl:</div>
<div class="a sep" style="left:545px;top:317px;width:84px"></div>
<div class="a inp" style="left:629px;top:299px;width:34px;height:20px"></div>
<div class="a t" style="left:632.2px;top:301.9px;--w:5.0;letter-spacing:-0.125px;">3</div>
<div class="a t" style="left:667.2px;top:301.9px;--w:52.5;letter-spacing:0.877px;">verfügbar</div>
<div class="a t" style="left:741.6px;top:301.9px;--w:78.6;letter-spacing:0.722px;">von insgesamt</div>
<div class="a sep" style="left:741px;top:317px;width:84px"></div>
<div class="a inp" style="left:825px;top:299px;width:34px;height:20px"></div>
<div class="a t" style="left:827.7px;top:301.9px;--w:12.0;letter-spacing:0.750px;">10</div>
<div class="a t" style="left:862.8px;top:301.9px;--w:31.8;letter-spacing:1.321px;">Stück</div>
<div class="a t" style="left:548.7px;top:328.9px;--w:48.0;letter-spacing:0.797px;color:#2c2c70">Schrank:</div>
<div class="a sep" style="left:545px;top:344px;width:84px"></div>
<div class="a dis" style="left:629px;top:326px;width:156px;height:19px"></div>
<div class="a ddd" style="left:771px;top:327px"><svg class="a" style="left:3px;top:4px" width="8" height="6" viewBox="0 0 8 6"><path d="M0.8,0.8 L4,4.2 L7.2,0.8" stroke="#c8c8c0" stroke-width="1.6" fill="none"/></svg></div>
<div class="a t" style="left:633.6px;top:329.4px;--w:54.0;letter-spacing:0.684px;color:#b4b4b0">Schrank 2</div>
<div class="a t" style="left:801.6px;top:328.9px;--w:30.6;letter-spacing:0.817px;">Platz:</div>
<div class="a sep" style="left:799px;top:344px;width:46px"></div>
<div class="a inp" style="left:845px;top:326px;width:62px;height:20px"></div>
<div class="a t" style="left:847.2px;top:328.9px;--w:12.6;letter-spacing:1.350px;">14</div>
<div class="a t" style="left:548.7px;top:355.9px;--w:65.1;letter-spacing:0.754px;">Bemerkung:</div>
<div class="a sep" style="left:545px;top:371px;width:84px"></div>
<div class="a inp" style="left:629px;top:353px;width:278px;height:55px"></div>
<div class="a t" style="left:632.7px;top:355.9px;--w:78.0;letter-spacing:0.573px;">Beispiel-Daten</div>
<div class="a" style="left:891px;top:355px;width:14px;height:51px;background:#fbfbf9;border-left:1px solid #eeeeea"></div>
<div class="a ddd" style="left:891px;top:355px;height:14px"><svg class="a" style="left:3px;top:3px" width="8" height="6" viewBox="0 0 8 6"><path d="M0.8,5.2 L4,1.8 L7.2,5.2" stroke="#c8c8c0" stroke-width="1.6" fill="none"/></svg></div>
<div class="a ddd" style="left:891px;top:391px;height:14px"><svg class="a" style="left:3px;top:4px" width="8" height="6" viewBox="0 0 8 6"><path d="M0.8,0.8 L4,4.2 L7.2,0.8" stroke="#c8c8c0" stroke-width="1.6" fill="none"/></svg></div>
<div class="a" style="left:538px;top:160px;width:1px;height:526px;background:#f2f2f2"></div>
<div class="a" style="left:541px;top:418px;width:489px;height:1px;background:#b8b8b8;border-bottom:0"></div>
<div class="a" id="grid"></div>
<div class="a gh" style="left:541px;width:487px"></div>
<div class="a" style="left:608px;top:423px;width:76px;height:17px;background:#fff;border:1px solid;border-color:#a0a0a0 #f0f0f0 #f0f0f0 #a0a0a0"></div>
<div class="a ghl"></div>
<div class="a t" style="left:542.6px;top:425.6px;--w:43.2;letter-spacing:0.636px;">Besitzer</div>
<div class="a t" style="left:687.2px;top:425.6px;--w:19.4;letter-spacing:0.716px;">Anz</div>
<div class="a t" style="left:715.6px;top:425.6px;--w:26.6;letter-spacing:0.632px;">Kenn</div>
<div class="a t" style="left:751.2px;top:425.6px;--w:46.0;letter-spacing:0.594px;">Ausgabe</div>
<div class="a t" style="left:825.5px;top:425.6px;--w:23.8;letter-spacing:0.852px;">Frist</div>
<div class="a t" style="left:899.2px;top:425.6px;--w:59.5;letter-spacing:0.529px;">Bemerkung</div>
<div class="a" style="left:685px;top:422px;width:2px;height:19px;background:#2a2a2a;border-right:1px solid #fff"></div>
<div class="a gcol" style="left:685px;top:442px;height:117px"></div>
<div class="a" style="left:713px;top:422px;width:2px;height:19px;background:#2a2a2a;border-right:1px solid #fff"></div>
<div class="a gcol" style="left:713px;top:442px;height:117px"></div>
<div class="a" style="left:749px;top:422px;width:2px;height:19px;background:#2a2a2a;border-right:1px solid #fff"></div>
<div class="a gcol" style="left:749px;top:442px;height:117px"></div>
<div class="a" style="left:823px;top:422px;width:2px;height:19px;background:#2a2a2a;border-right:1px solid #fff"></div>
<div class="a gcol" style="left:823px;top:442px;height:117px"></div>
<div class="a" style="left:897px;top:422px;width:2px;height:19px;background:#2a2a2a;border-right:1px solid #fff"></div>
<div class="a gcol" style="left:897px;top:442px;height:117px"></div>
<div class="a grow" style="top:461.0px"></div>
<div class="a t" style="left:542.6px;top:445.4px;--w:59.4;letter-spacing:0.664px">Maas, Jörg</div>
<div class="a t" style="left:688.2px;top:445.4px">1</div>
<div class="a t" style="left:716.2px;top:445.4px">B</div>
<div class="a t" style="left:751.2px;top:445.4px;--w:61.75;letter-spacing:0.854px">25.10.2005</div>
<div class="a t" style="left:899.2px;top:445.4px;--w:60;letter-spacing:0.963px">unbefristet</div>
<div class="a grow" style="top:480.4px"></div>
<div class="a t" style="left:542.6px;top:464.8px;--w:90.6;letter-spacing:0.644px">Petersen, Bärbel</div>
<div class="a t" style="left:688.2px;top:464.8px">1</div>
<div class="a t" style="left:751.2px;top:464.8px;--w:61.75;letter-spacing:0.854px">25.10.2005</div>
<div class="a t" style="left:825.5px;top:464.8px;--w:61.75;letter-spacing:0.854px">31.12.2006</div>
<div class="a grow" style="top:499.8px"></div>
<div class="a t" style="left:542.6px;top:484.2px;--w:90.3;letter-spacing:0.798px">Schneider, Anne</div>
<div class="a t" style="left:688.2px;top:484.2px">2</div>
<div class="a t" style="left:751.2px;top:484.2px;--w:61.75;letter-spacing:0.854px">25.10.2005</div>
<div class="a grow" style="top:519.2px"></div>
<div class="a t" style="left:542.6px;top:503.6px;--w:64;letter-spacing:0.739px">Müller, Inga</div>
<div class="a t" style="left:688.2px;top:503.6px">1</div>
<div class="a t" style="left:751.2px;top:503.6px;--w:61.75;letter-spacing:0.854px">25.10.2005</div>
<div class="a grow" style="top:538.6px"></div>
<div class="a t" style="left:542.6px;top:523.0px;--w:85.3;letter-spacing:0.661px">Schulz, Michael</div>
<div class="a t" style="left:688.2px;top:523.0px">1</div>
<div class="a t" style="left:751.2px;top:523.0px;--w:61.75;letter-spacing:0.854px">26.10.2005</div>
<div class="a grow" style="top:558.0px"></div>
<div class="a t" style="left:542.6px;top:542.4px;--w:81.5;letter-spacing:0.652px">Hilbert, Renate</div>
<div class="a t" style="left:688.2px;top:542.4px">1</div>
<div class="a t" style="left:751.2px;top:542.4px;--w:61.75;letter-spacing:0.854px">26.10.2005</div>
<div class="a" style="left:541px;top:641px;width:487px;height:15px;background:linear-gradient(#f2f2ec,#fbfbf8 40%,#fdfdfb)"></div>
<div class="a sbb" style="left:543px;top:642px;width:12px"><svg class="a" style="left:3px;top:3px" width="6" height="8" viewBox="0 0 6 8"><path d="M5,0.8 L1.5,4 L5,7.2" stroke="#1c2c6c" stroke-width="1.8" fill="none"/></svg></div>
<div class="a sbb" style="left:557px;top:642px;width:14px"><div class="a" style="left:4px;top:3px;width:6px;height:7px;border-left:1px solid #9cb0e0;border-right:1px solid #9cb0e0"></div></div>
<div class="a sbb" style="left:1015px;top:642px;width:11px"><svg class="a" style="left:3px;top:3px" width="6" height="8" viewBox="0 0 6 8"><path d="M1,0.8 L4.5,4 L1,7.2" stroke="#1c2c6c" stroke-width="1.8" fill="none"/></svg></div>
<div class="a bb" style="left:541px;width:100px"></div>
<div class="a" style="left:650px;top:662px;width:1px;height:16px;background:#b8b8b8"></div>
<div class="a bb" style="left:659px;width:77px"></div>
<div class="a bb" style="left:743px;width:57px"></div>
<div class="a bb" style="left:808px;width:99px;border-color:#d8d8cc;background:#ecebe4"></div>
<div class="a t" style="left:551.8px;top:662.9px;--w:76.8;letter-spacing:0.623px;z-index:4">Person zeigen</div>
<div class="a t" style="left:665.2px;top:662.9px;--w:61.6;letter-spacing:0.487px;z-index:4">Rücknahme</div>
<div class="a t" style="left:750.8px;top:662.9px;--w:39.3;letter-spacing:1.110px;z-index:4">Verlust</div>
<div class="a t" style="left:812.3px;top:662.9px;--w:88.4;letter-spacing:0.667px;z-index:4;color:#acaca4">Wiedergefunden</div>
<svg class="a" style="left:170px;top:124px;z-index:3" width="25" height="27" viewBox="0 0 25 27"><polygon points="0.8,9 9.7,14.7 9.7,25.3 1.2,18.2" fill="#e2e4ea"/>
<polygon points="9.7,14.7 23,10.2 23.9,22.2 16.3,25.3 9.7,25.3" fill="#eef0f4"/>
<line x1="9.7" y1="14.7" x2="9.7" y2="25.3" stroke="#c0c4cc" stroke-width="0.8"/>
<polygon points="0.3,8 7.9,0.4 23,10.2 9.7,14.7" fill="#3c74b8"/>
<polygon points="2.5,7.8 7.9,2.2 12,5 6,10" fill="#5a96d8"/>
<line x1="7.9" y1="0.6" x2="23" y2="10.2" stroke="#3a4048" stroke-width="1.3"/>
<line x1="1.2" y1="18.2" x2="9.7" y2="25.3" stroke="#3c4048" stroke-width="1.6"/>
<line x1="9.7" y1="25.3" x2="18" y2="24.5" stroke="#6a6e78" stroke-width="1.2"/>
<rect x="15.9" y="15.1" width="4" height="5.8" fill="#d4962c"/>
<path d="M7,3.5 v3.5" stroke="#e8f0ff" stroke-width="1.2"/></svg>
<svg class="a" style="left:264px;top:125px;z-index:3" width="17" height="26" viewBox="0 0 17 26"><rect x="3" y="12" width="10" height="13.5" rx="1.5" fill="#c6c6c6" stroke="#545454" stroke-width="1"/>
<rect x="5" y="14" width="3" height="10" fill="#e4e4e4"/>
<circle cx="8" cy="7" r="7" fill="#d6d6d6" stroke="#505050" stroke-width="1"/>
<ellipse cx="6" cy="6" rx="2" ry="3.5" fill="#f4f4f4"/>
<rect x="7" y="1" width="2.2" height="9" rx="1" fill="#101010"/></svg>
<svg class="a" style="left:349px;top:124px;z-index:3" width="19" height="27" viewBox="0 0 19 27"><rect x="1" y="2.5" width="16" height="20" fill="#fff6dc" stroke="#d0a050" stroke-width="2"/>
<polygon points="6,9 18,2 18,21 6,27" fill="#c47a2e"/>
<polygon points="8,10 17,4 17,8 8,13" fill="#e8a050"/>
<line x1="7" y1="16" x2="10" y2="16" stroke="#f8d090" stroke-width="1.2"/>
<line x1="6" y1="27" x2="18" y2="21" stroke="#7a4010" stroke-width="1"/></svg>
<svg class="a" style="left:419px;top:124px;z-index:3" width="27" height="27" viewBox="0 0 27 27"><line x1="9" y1="9" x2="24.5" y2="24.5" stroke="#d89434" stroke-width="5" stroke-linecap="round"/>
<path d="M13.5,17.5 l-2.2,2.2 l2,2 l2.2,-2.2 Z M17,21 l-2,2 l2,2 l2,-2 Z M20.5,24.5 l-1.5,1.5 l1.5,1.5 l1.5,-1.5 Z" fill="#c07a20"/>
<line x1="10.5" y1="9.5" x2="23" y2="22" stroke="#f4c870" stroke-width="1.3"/>
<path d="M7,0.8 L10.5,1.8 L12.8,4.8 L13.3,8.5 L11.5,11.8 L8,13.2 L4.2,12.6 L1.4,10 L0.8,6.2 L2.5,2.6 Z" fill="#dc9c38"/>
<path d="M3,5 C3.5,3 5.5,2.2 7,2.5 C6,4 5,5.5 4.5,7.5 Z" fill="#fff6dc"/>
<path d="M1.4,10 L4.2,12.6 L8,13.2 L11.5,11.8" stroke="#9c6418" stroke-width="1" fill="none"/></svg>
<svg class="a" style="left:516px;top:125px;z-index:3" width="20" height="26" viewBox="0 0 20 26"><rect x="1.2" y="1.2" width="17.5" height="23" fill="#fdf8ea" stroke="#c8a060" stroke-width="2.4"/>
<line x1="18.5" y1="1" x2="18.5" y2="25" stroke="#8a6030" stroke-width="1"/>
<path d="M6,6 v10 M10,11 v12 M14,5 v10" stroke="#b89870" stroke-width="1.3"/>
<circle cx="6" cy="6" r="1.8" fill="#a08050"/>
<circle cx="10" cy="12" r="1.8" fill="#906040"/>
<circle cx="14" cy="5" r="1.8" fill="#b8a040"/></svg>
<svg class="a" style="left:608px;top:125px;z-index:3" width="21" height="25" viewBox="0 0 21 25"><path d="M0.5,24 C0.5,17 4,14 10,14 C16,14 20,16 20,24 Z" fill="#5a98d8"/>
<path d="M3,22 C3,18 5,16 8,16" stroke="#9ccaf0" stroke-width="1.2" fill="none"/>
<rect x="6.5" y="3" width="10" height="12" rx="3" fill="#e8a040"/>
<path d="M6,10 C5,4 6,0.5 11,0.5 C16,0.5 17.5,2 17,5 L9,5 C8.5,7 8,9 7.5,11 Z" fill="#141414"/></svg>
<svg class="a" style="left:708px;top:126px;z-index:3" width="28" height="23" viewBox="0 0 28 23"><defs><linearGradient id="ga" x1="0" y1="0" x2="1" y2="0"><stop offset="0" stop-color="#3a9a14"/><stop offset=".6" stop-color="#8cbc28"/><stop offset="1" stop-color="#5a8a20"/></linearGradient><linearGradient id="gb" x1="0" y1="0" x2="1" y2="0"><stop offset="0" stop-color="#5a8a20"/><stop offset=".4" stop-color="#9cc430"/><stop offset="1" stop-color="#3a9a14"/></linearGradient></defs>
<path d="M5,11.5 C7,5 13,1 20,1 C23,1 25.5,2.2 27.5,4.2 C22,3.2 15,4.5 11,10.5 Z" fill="url(#ga)"/>
<polygon points="2.4,2 0.2,12.7 11,12.2" fill="#2c8a10"/>
<path d="M23,11.5 C21,18 15,22 8,22 C5,22 2.5,20.8 0.5,18.8 C6,19.8 13,18.5 17,12.5 Z" fill="url(#gb)"/>
<polygon points="16,11 27,10.5 24.5,21.5" fill="#2c8a10"/></svg>
<svg class="a" style="left:805px;top:125px;z-index:3" width="19" height="26" viewBox="0 0 19 26"><polygon points="1,6 16,5 19,23 3,26" fill="#f4f6fa" stroke="#8890a0" stroke-width="0.8"/>
<polygon points="1,6 16,5 17,11 2,13" fill="#3a70b8"/>
<path d="M4,9 l2,2 l3,-3" stroke="#fff" stroke-width="1.5" fill="none"/>
<path d="M3,16 L17,15 M4,19 L17,18 M4,22 L18,21 M8,13 L9,25 M13,12 L14,24" stroke="#c8ccd8" stroke-width="0.8"/>
<line x1="2" y1="13" x2="3" y2="26" stroke="#303030" stroke-width="1"/>
<rect x="3" y="0.5" width="2" height="6" fill="#202020"/>
<rect x="12" y="0.5" width="2" height="6" fill="#202020"/></svg>
<svg class="a" style="left:882px;top:126px;z-index:3" width="28" height="23" viewBox="0 0 28 23"><path d="M1,3 C5,1 10,2 13,4 C16,2 21,1 25,3 L25,19 C21,18 16,19 13,21 C10,19 5,18 1,19 Z" fill="#f6f8fc" stroke="#a8acb8" stroke-width="1"/>
<path d="M0.5,20 C5,19 10,20 13,22.5 C16,20 21,19 25,20" stroke="#8a98b0" stroke-width="1.2" fill="none"/>
<path d="M4,6 h5 M4,9 h5 M4,13 h5 M4,16 h5" stroke="#a8b0c8" stroke-width="1"/>
<path d="M16,6 h5 M16,9 h5 M16,13 h5 M16,16 h5" stroke="#70a8d8" stroke-width="1.2"/>
<circle cx="12.5" cy="6" r="1.3" fill="#303a58"/><circle cx="12.5" cy="10" r="1.3" fill="#303a58"/><circle cx="12.5" cy="14" r="1.3" fill="#303a58"/><circle cx="12.5" cy="18" r="1.3" fill="#303a58"/>
<rect x="25" y="4" width="2.5" height="18" fill="#a07050"/>
<rect x="25" y="15" width="2.5" height="7" fill="#3a6898"/></svg>
<svg class="a" style="left:975px;top:124px;z-index:3" width="22" height="27" viewBox="0 0 22 27"><polygon points="1,3 18,1 21,2 21,23 4,26 1,25" fill="#4a5078"/>
<polygon points="1,3 18,1 20,2 3,4" fill="#e8e8f0"/>
<rect x="2" y="4" width="3" height="21" fill="#6a70a0"/>
<path d="M10,9 C10,6 17,5.5 17,9.5 C17,12 13.5,12.5 13.5,16" stroke="#e8c050" stroke-width="2.6" fill="none"/>
<rect x="12.2" y="18" width="2.6" height="2.6" fill="#f0e0a0"/></svg>
<svg class="a" style="left:569px;top:173px;z-index:3" width="11" height="12" viewBox="0 0 11 12"><path d="M1,0.5 H6.5 L10,4 V11.5 H1 Z" fill="#fff" stroke="#222" stroke-width="1.2"/>
<path d="M6.5,0.5 V4 H10" stroke="#222" stroke-width="1" fill="none"/></svg>
<svg class="a" style="left:633px;top:171px;z-index:3" width="16" height="14" viewBox="0 0 16 14"><rect x="1" y="2.5" width="10" height="11" fill="#fff" stroke="#222" stroke-width="1.3"/>
<path d="M3,5 h3 M3,7.5 h2" stroke="#444" stroke-width="1"/>
<path d="M5,12 L14.5,2 L15.5,3 L6.5,13 L4.5,13.5 Z" fill="#fff" stroke="#222" stroke-width="1.1"/></svg>
<svg class="a" style="left:704px;top:172px;z-index:3" width="11" height="11" viewBox="0 0 11 11"><rect x="0.5" y="1" width="10" height="2" fill="#333"/>
<rect x="4" y="0" width="3" height="1.5" fill="#333"/>
<rect x="1.5" y="3.5" width="8" height="7.5" fill="#777" stroke="#333" stroke-width="1"/>
<path d="M4,4 v6 M6.5,4 v6" stroke="#bbb" stroke-width="0.8"/></svg>
<svg class="a" style="left:771px;top:173px;z-index:3" width="11" height="11" viewBox="0 0 11 11"><rect x="4" y="0" width="1.5" height="1.5" fill="#444"/><rect x="6.5" y="0" width="1.5" height="1.5" fill="#444"/>
<rect x="3" y="3" width="5" height="2.5" fill="#555"/>
<rect x="0.5" y="5.5" width="10" height="5" fill="#f0f0f0" stroke="#333" stroke-width="1"/>
<rect x="1" y="7" width="9" height="1.5" fill="#333"/></svg>
<svg class="a" style="left:837px;top:173px;z-index:3" width="14" height="12" viewBox="0 0 14 12"><path d="M1,1 L5,3 V11 L1,9 Z" fill="#fff" stroke="#222" stroke-width="1.2"/>
<path d="M5,3 L9,1.5 L12.5,3.5 V11 L5,11 Z" fill="#e8e0b8" stroke="#222" stroke-width="1.2"/></svg>
<svg class="a" style="left:902px;top:171px;z-index:3" width="18" height="15" viewBox="0 0 18 15"><path d="M1.2,5.4 C3.5,3 6,0.5 8.5,0.5 C10,0.5 11,1.2 11.8,3 L15.8,4.4 C17,4.4 17.6,6.5 17.6,8.5 C17.6,10.5 16.5,12.2 14.6,12.6 L13.5,14.8 L8,14.8 C6,14.6 4,13 0.8,12.6 Z" fill="#fff"/>
<path d="M1.2,5.6 C3.5,3 6,0.5 8.5,0.5 C10,0.5 11,1.2 11.8,2.8" stroke="#333" stroke-width="1.1" fill="none"/>
<path d="M1.2,5.2 L0.8,12.6 C3,12.8 4,13.5 5,14 C6,14.5 7,14.8 8,14.8 L13.5,14.8 C14.5,14.8 14.6,13.5 14.5,12.4" stroke="#111" stroke-width="1.4" fill="none"/>
<path d="M9.2,4.4 H15.8 C17,4.4 17.8,6.5 17.8,8.5 C17.8,10.5 16.5,12.2 15,12.2" stroke="#111" stroke-width="1.4" fill="none"/>
<path d="M11,6.6 H16.6 M10.3,9.4 H16.6 M10.3,12.2 H14.8" stroke="#111" stroke-width="1.3"/></svg>

</div></div>
<div class="a" id="reflov"></div>
</div>
</body></html>
